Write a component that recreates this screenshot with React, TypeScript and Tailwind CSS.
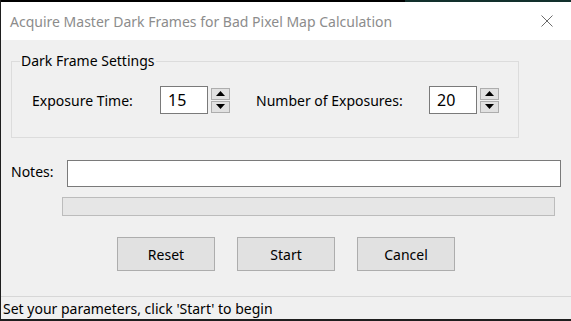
import React from 'react';

const font = { fontFamily: '"Noto Sans", "Open Sans", Arial, sans-serif' };

function Spinner() {
  return (
    <div className="flex flex-col gap-[1px] ml-[3px]">
      <div className="w-[19px] h-[12px] bg-[#e1e1e1] border border-[#adadad] flex items-center justify-center">
        <svg width="9" height="5" viewBox="0 0 9 5">
          <path d="M0 5 L4.5 0 L9 5 Z" fill="#000" />
        </svg>
      </div>
      <div className="w-[19px] h-[12px] bg-[#e1e1e1] border border-[#adadad] flex items-center justify-center">
        <svg width="9" height="5" viewBox="0 0 9 5">
          <path d="M0 0 L9 0 L4.5 5 Z" fill="#000" />
        </svg>
      </div>
    </div>
  );
}

function NumberField({ value }: { value: string }) {
  return (
    <div className="flex items-center">
      <div className="w-[48px] h-[28px] bg-white border border-[#7a7a7a] flex items-center pl-[7px] text-[16px] text-black">
        {value}
      </div>
      <Spinner />
    </div>
  );
}

export default function App() {
  return (
    <div
      className="w-[571px] h-[321px] bg-[#f0f0f0] flex flex-col overflow-hidden border-l border-[#1e1e1e] relative text-[14px] text-black"
      style={font}
    >
      <div className="h-[2px] flex">
        <div className="w-[404px] bg-black" />
        <div className="flex-1 bg-[#12302c]" />
      </div>

      <div className="h-[38px] bg-white flex items-center justify-between pl-[9px] pr-[18px]">
        <span className="text-[14px] text-[#8c8c8c]">
          Acquire Master Dark Frames for Bad Pixel Map Calculation
        </span>
        <svg width="12" height="12" viewBox="0 0 12 12">
          <path d="M0.5 0.5 L11.5 11.5 M11.5 0.5 L0.5 11.5" stroke="#6b6b6b" strokeWidth="1" />
        </svg>
      </div>

      <div className="flex-1 flex flex-col">
        <fieldset className="mx-[10px] mt-[12px] w-[508px] h-[86px] border border-[#dcdcdc] pl-[20px] pt-[16px]">
          <legend className="ml-[-12px] px-[1px] text-[14px] leading-[18px]">Dark Frame Settings</legend>
          <div className="flex items-center">
            <span className="w-[128px]">Exposure Time:</span>
            <NumberField value="15" />
            <span className="ml-[26px] w-[173px]">Number of Exposures:</span>
            <NumberField value="20" />
          </div>
        </fieldset>

        <div className="flex items-center mt-[22px] pl-[10px]">
          <span className="w-[56px] mt-[-4px]">Notes:</span>
          <div className="w-[494px] h-[27px] bg-white border border-[#7a7a7a]" />
        </div>

        <div className="ml-[61px] mt-[10px] w-[493px] h-[19px] bg-[#e6e6e6] border border-[#bcbcbc]" />

        <div className="flex gap-[22px] pl-[116px] mt-[21px]">
          {['Reset', 'Start', 'Cancel'].map((label) => (
            <button
              key={label}
              className="w-[98px] h-[34px] bg-[#e1e1e1] border border-[#adadad] text-[14px] text-black"
            >
              {label}
            </button>
          ))}
        </div>

        <div className="mt-auto border-t border-[#d7d7d7] h-[23px] flex items-center pl-[2px]">
          <span className="text-[14px]">Set your parameters, click 'Start' to begin</span>
        </div>
      </div>
      <div className="h-[2px] bg-[#1e1e1e]" />
    </div>
  );
}
